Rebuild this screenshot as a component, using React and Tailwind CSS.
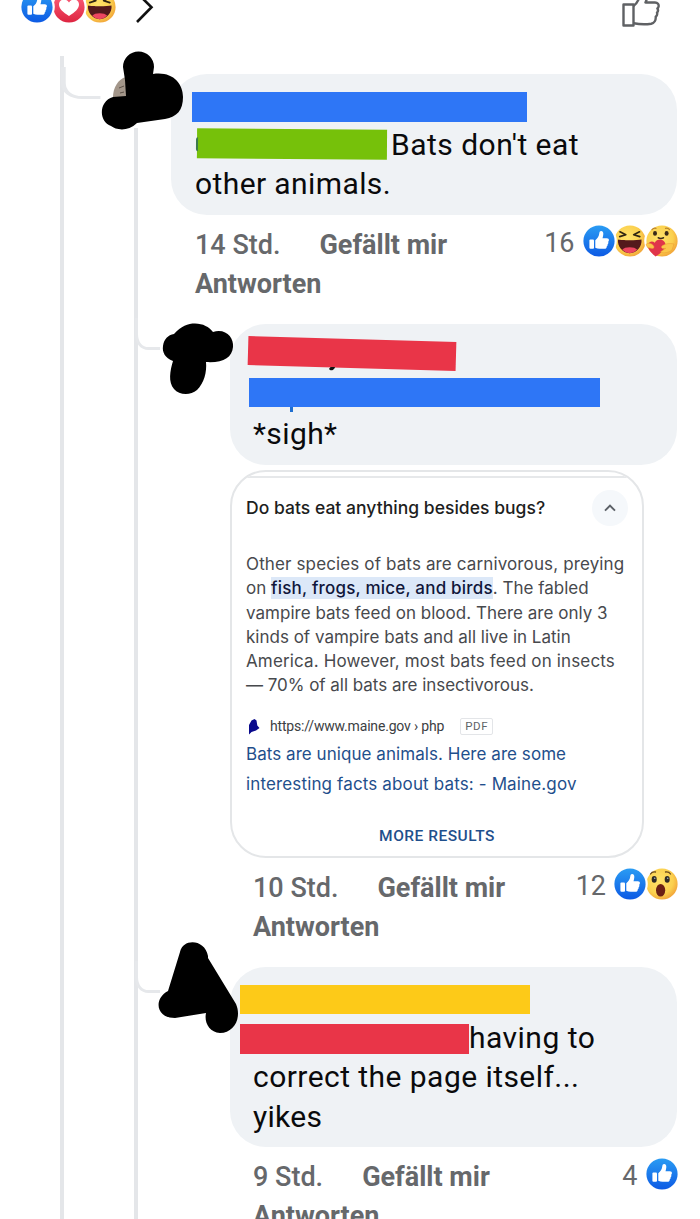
import React from "react";

function Disc({ children, fill, z }) {
  return (
    <svg viewBox="0 0 32 32" className={`relative -mr-[0.500px] block h-8 w-8 shrink-0 overflow-visible ${z}`}>
      <defs>
        <linearGradient id="likeFill" x1="0" y1="0" x2="0" y2="1">
          <stop offset="0" stopColor="#2a9cf3" />
          <stop offset="1" stopColor="#0d5ae4" />
        </linearGradient>
        <linearGradient id="loveFill" x1="0" y1="0" x2="0" y2="1">
          <stop offset="0" stopColor="#ff6680" />
          <stop offset="1" stopColor="#dd2440" />
        </linearGradient>
        <radialGradient id="faceFill" cx="0.42" cy="0.4" r="0.62">
          <stop offset="0" stopColor="#ffe36b" />
          <stop offset="0.7" stopColor="#fbd04e" />
          <stop offset="1" stopColor="#f2a63a" />
        </radialGradient>
      </defs>
      <circle cx="16" cy="16" r="17.8" fill="#fff" />
      <circle cx="16" cy="16" r="15.6" fill={fill} />
      {children}
    </svg>
  );
}

function Like() {
  return (
    <Disc fill="url(#likeFill)" z="z-30">
      <rect x="6.4" y="14.4" width="4.6" height="9.4" rx="1" fill="#fff" />
      <path
        d="M12.300 15.200c2.200-1.600 3.600-3.600 4-6.900.2-1.500.7-2.300 1.800-2.300 1.700 0 2.400 1.400 2.200 3.300-.1 1.400-.4 2.700-.8 3.900h4.300c1.500 0 2.300.9 2.100 2.100 0 .7-.3 1.200-.8 1.500.5.8.4 1.900-.5 2.500.2.900-.1 1.700-.9 2.100.1 1.500-.7 2.400-2.400 2.400h-4.700c-1.600 0-2.900-.3-4.300-1z"
        fill="#fff"
      />
    </Disc>
  );
}

function Love() {
  return (
    <Disc fill="url(#loveFill)" z="z-20">
      <path
        d="M16 25C10 21.300 6 18 6 13.600 6 10.500 8.200 8.500 10.900 8.500c2.100 0 4 1.100 5.100 3 1.100-1.900 3-3 5.100-3C23.800 8.500 26 10.500 26 13.600c0 4.400-4 7.700-10 11.400z"
        fill="#fff"
      />
    </Disc>
  );
}

function Haha() {
  return (
    <Disc fill="url(#faceFill)" z="z-10">
      <path d="M6 6.800l5.800 2.900-6.100 1.900M25.500 6.800l-5.800 2.900 6.100 1.900" fill="none" stroke="#2f2412" strokeWidth="1.700" strokeLinecap="round" strokeLinejoin="round" />
      <path d="M4 14.600c3.500.9 19.500.9 23.500 0 .8 6.600-4.500 13.600-11.800 13.600S3.200 21.200 4 14.600z" fill="#54191c" />
      <path d="M8.300 24.600c2.200-3.300 12.600-3.300 14.800 0-2 2.300-4.500 3.600-7.400 3.600s-5.400-1.300-7.400-3.600z" fill="#ee4660" />
    </Disc>
  );
}

function Care() {
  return (
    <Disc fill="url(#faceFill)" z="z-10">
      <path d="M6 4.600c1-1.200 2.400-1.600 4-1.300M19.500 3.300c1.600-.3 3 .1 4 1.300" fill="none" stroke="#b9822d" strokeWidth="1.200" strokeLinecap="round" />
      <ellipse cx="9" cy="8.400" rx="2" ry="2.300" fill="#3a2a18" />
      <ellipse cx="20.600" cy="8.400" rx="2" ry="2.300" fill="#3a2a18" />
      <path d="M12.200 12.800c1.600.7 3.700.7 5.300 0" fill="none" stroke="#3a2a18" strokeWidth="1.500" strokeLinecap="round" />
      <path d="M9.500 31.500C4 26.500.8 23 2.300 18.900c1-2.700 4.300-3.300 6.500-1.200 1.500-3 5.400-4.100 8.300-2.200 3.300 2.200 2.700 6.200.7 9.100-1.900 2.800-4.900 5-8.300 6.900z" fill="#e0344a" />
      <path d="M0 19.500c2-2 5-1.500 7.500 1.200 1.200 1.500.3 3-1.500 2.700L1.500 22.500zM28 19c-4.500-1-8-.5-11.500 1.600-1.800 1.200-1 3.200 1 3l2.300-.3c-1.800 1.700-4 2.200-5.300 3.600 2.800 2 8.500.6 11.500-2z" fill="#fbc64a" stroke="#e9982f" strokeWidth="0.500" />
    </Disc>
  );
}

function Wow() {
  return (
    <Disc fill="url(#faceFill)" z="z-10">
      <path d="M4.500 6c1-1.600 2.800-2.400 5-2M19.500 4c2.200-.4 4 .4 5 2" fill="none" stroke="#6b4a1c" strokeWidth="1.300" strokeLinecap="round" />
      <ellipse cx="8.200" cy="11.400" rx="2.500" ry="3.300" fill="#2f2a26" />
      <ellipse cx="21.200" cy="11.400" rx="2.500" ry="3.300" fill="#2f2a26" />
      <circle cx="8.700" cy="10.300" r="0.800" fill="#9fb6c8" />
      <circle cx="21.700" cy="10.300" r="0.800" fill="#9fb6c8" />
      <ellipse cx="14.600" cy="22.300" rx="4.600" ry="6.300" fill="#6b1f14" />
    </Disc>
  );
}

function Connector({ className }) {
  return (
    <svg viewBox="0 0 26 34" preserveAspectRatio="none" className={className}>
      <path d="M1.500 0v16c0 9 5 14.500 12 14.500h11.500" fill="none" stroke="#e6e8eb" strokeWidth="3" />
    </svg>
  );
}

function Meta({ age, count, faces }) {
  return (
    <div className="mt-[11px] flex items-start justify-between text-[27px] leading-[39.300px] text-[#66686b]">
      <div>
        <div className="flex gap-[39px]">
          <span className="font-medium">{age}</span>
          <span className="font-bold">Gefällt mir</span>
        </div>
        <div className="font-bold">Antworten</div>
      </div>
      <div className="flex h-[36px] items-center gap-[8px] font-normal">
        <span>{count}</span>
        <div className="-mt-[5px] flex">{faces}</div>
      </div>
    </div>
  );
}

function Bubble({ children }) {
  return (
    <div className="rounded-[36px] bg-[#eff2f5] py-[11px] text-[30px] leading-[39.500px] tracking-[0.3px] text-[#0a0a0c]">
      {children}
    </div>
  );
}

function ResultCard() {
  return (
    <section className="relative mt-[5px] flex h-[388px] w-[414px] flex-col overflow-hidden rounded-[36px] border-2 border-[#e4e6e8] bg-white pl-[14px] font-['Inter',sans-serif] whitespace-nowrap">
      <div className="-ml-[14px] mt-[4px] h-[2px] shrink-0 bg-[#e6e8ea]" />
      <div className="mt-[12px] flex h-9 shrink-0 items-center justify-between pr-[14px]">
        <h2 className="text-[17.500px] leading-6 font-medium tracking-[0.030px] text-[#1d1e21]">Do bats eat anything besides bugs?</h2>
        <span className="flex h-9 w-9 items-center justify-center rounded-full bg-[#f5f8fb]">
          <svg viewBox="0 0 14 10" className="h-[10px] w-[14px]">
            <path d="M2 7.700l5-5 5 5" fill="none" stroke="#5b6066" strokeWidth="1.900" />
          </svg>
        </span>
      </div>
      <div className="mt-[26.500px] text-[17px] leading-[24.200px] text-[#47494d]">
        <div className="tracking-[0.130px]">Other species of bats are carnivorous, preying</div>
        <div>
          on <span className="bg-[#dce8f8] py-px font-medium tracking-[0.200px] text-[#10163a]">fish, frogs, mice, and birds</span>. The fabled
        </div>
        <div className="tracking-[0.020px]">vampire bats feed on blood. There are only 3</div>
        <div>kinds of vampire bats and all live in Latin</div>
        <div className="tracking-[0.140px]">America. However, most bats feed on insects</div>
        <div className="tracking-[-0.030px]">— 70% of all bats are insectivorous.</div>
      </div>
      <div className="mt-[19px] flex h-[20px] items-center pl-[2px] font-['Roboto',sans-serif]">
        <svg viewBox="0 0 12 17" className="h-[17px] w-3">
          <path d="M1 7L3.500 2.500 6.500 1l2 1.500.8 5L11.500 10 8 12.500 3.500 14 1 16.500z" fill="#0a0a8c" />
        </svg>
        <span className="ml-[10px] text-[14px] tracking-[-0.180px] text-[#3c4043]">https://www.maine.gov › php</span>
        <span className="ml-[16px] flex h-[17px] w-[33px] items-center justify-center rounded-[2px] border border-[#e3e5e8] text-[11.500px] tracking-[0.500px] text-[#5f6368]">
          PDF
        </span>
      </div>
      <div className="mt-[4px] text-[17px] leading-[29.200px] text-[#1f4f8c]">
        <div className="tracking-[0.050px]">Bats are unique animals. Here are some</div>
        <div className="tracking-[0.140px]">interesting facts about bats: - Maine.gov</div>
      </div>
      <div className="mt-[27.500px] pr-[14px] text-center font-['Roboto',sans-serif] text-[15.500px] leading-5 font-medium tracking-[0.500px] text-[#1f4f8c]">
        MORE RESULTS
      </div>
    </section>
  );
}

export default function App() {
  return (
    <main className="relative h-[1219px] w-[700px] overflow-hidden bg-white font-['Roboto',sans-serif] whitespace-nowrap">
      <div className="absolute top-14 left-[60px] h-[1163px] w-1 bg-[#e4e6e9]" />
      <div className="absolute top-32 left-[134px] h-[1091px] w-1 bg-[#e4e6e9]" />
      <Connector className="absolute top-[67px] left-[61px] h-[34px] w-[41px]" />
      <Connector className="absolute top-[318px] left-[135px] h-[34px] w-[26px]" />
      <Connector className="absolute top-[961px] left-[135px] h-[34px] w-[26px]" />

      <header className="flex h-[74px] items-start justify-between pr-[40px] pl-[21px]">
        <div className="-mt-[9px] flex items-center">
          <Like />
          <Love />
          <Haha />
          <svg viewBox="0 0 20 32" className="ml-[18px] h-8 w-5">
            <path d="M3 2l14.500 14.200L3 31" fill="none" stroke="#111" strokeWidth="2.600" />
          </svg>
        </div>
        <svg viewBox="0 0 38 30" className="h-[30px] w-[38px] overflow-visible">
          <g fill="none" stroke="#5f6164" strokeWidth="2.400" strokeLinejoin="round">
            <path d="M1.500 4.500h10v21h-10z" />
            <path d="M11.500 6C14.500 4 16 1.500 17.500-3M26-4l-2.500 6.500h9.500c2.700 0 4 1.900 3.600 4-.2 1-.6 1.500-1.200 2 .8 1.200.7 3-.4 4.200.5 1.600 0 3-1.300 4 .3 3.300-1.200 6.400-4.500 7-5.500.8-12 .6-17.500-.5" />
          </g>
        </svg>
      </header>

      <article className="mr-[23px] ml-[171px]">
        <Bubble>
          <div className="pl-[21px]">
            <div className="flex h-[39.500px] items-center">
              <div className="mt-[4px] h-[29.500px] w-[335px] bg-[#2e76f6]" />
            </div>
          </div>
          <div className="flex items-center pl-[26px]">
            <div className="relative -mt-[1px] h-[29.500px] w-[190px] rotate-[0.400deg] bg-[#76c10a]">
              <div className="absolute top-[9px] -left-px h-[14px] w-[2px] rounded-l-full bg-[#3d7a4c]" />
            </div>
            <span className="ml-[4px] tracking-[0.480px]">Bats don't eat</span>
          </div>
          <div className="pl-6 tracking-[0.400px]">other animals.</div>
        </Bubble>
        <div className="pl-6">
          <Meta age="14 Std." count="16" faces={<><Like /><Haha /><Care /></>} />
        </div>
      </article>

      <article className="mt-[20px] mr-[23px] ml-[230px]">
        <Bubble>
          <div className="flex h-[39.500px] items-center pl-[18px]">
            <div className="relative -mt-[3px] h-[29px] w-[208px] rotate-[1.600deg] bg-[#e93548]">
              <svg viewBox="0 0 8 5" className="absolute top-[28px] left-[81px] h-[5px] w-2">
                <path d="M0.500 2.500C1 4.800 5.500 4.500 6.500 0.500H2z" fill="#111" />
              </svg>
            </div>
          </div>
          <div className="flex h-[39.500px] items-center pl-[19px]">
            <div className="relative -mt-[4px] h-[29.500px] w-[351px] bg-[#2e76f6]">
              <div className="absolute top-[29px] left-[41px] h-[5px] w-[3px] bg-[#1f6fd0]" />
            </div>
          </div>
          <div className="pl-[23px] tracking-[0.400px]">*sigh*</div>
        </Bubble>
        <ResultCard />
        <div className="pl-[23px]">
          <Meta age="10 Std." count="12" faces={<><Like /><Wow /></>} />
        </div>
      </article>

      <article className="mt-[20px] mr-[23px] ml-[230px]">
        <Bubble>
          <div className="flex h-[39.500px] items-center pl-[10px]">
            <div className="mt-[3px] h-[29.500px] w-[290px] bg-[#fdca18]" />
          </div>
          <div className="flex items-center pl-[10px]">
            <div className="mt-[3px] h-[29.500px] w-[229px] bg-[#e93548]" />
            <span className="tracking-[0.480px]">having to</span>
          </div>
          <div className="pl-[23px] tracking-[0.450px]">correct the page itself...</div>
          <div className="pl-[23px]">yikes</div>
        </Bubble>
        <div className="pl-[23px]">
          <Meta age="9 Std." count="4" faces={<Like />} />
        </div>
      </article>

      <svg viewBox="0 0 84 82" className="absolute top-[50px] left-[101px] h-[82px] w-[84px]">
        <path d="M12 47C12 38 17 29 25 27V47z" fill="#a3968a" />
        <path d="M18 38l5-2M19 43l4-1" stroke="#5d5148" strokeWidth="1" />
        <path d="M22 17A15.500 15.500 0 0 1 53 17L52 24C71 21 82 33 82 47C82 60 76 67 64 69L36 73C27 82 15 80 10 76C-3 71-2 51 12 47L25 46L24 30Z" fill="#000" />
      </svg>
      <svg viewBox="0 0 72 74" className="absolute top-[322px] left-[162px] h-[74px] w-[72px]">
        <path d="M12 12C19 4 26 1.500 33 1.500C41 1.500 47 5 51 10C64 6 72 16 71 25C70 36 61 41 44 40C45 50 42 61 35 68C28 74 17 73 12 67C6 60 8 49 11 39C3 36 0 30 1 24C2 17 6 13 12 12Z" fill="#000" />
      </svg>
      <svg viewBox="0 0 82 92" className="absolute top-[942px] left-[158px] h-[92px] w-[82px]">
        <path d="M22 10C25-4 47-3 50 14V16L78 62C84 76 76 91 62 91C51 90 46 80 48 71L17 76C-3 76-4 56 10 49Z" fill="#000" />
      </svg>
    </main>
  );
}
